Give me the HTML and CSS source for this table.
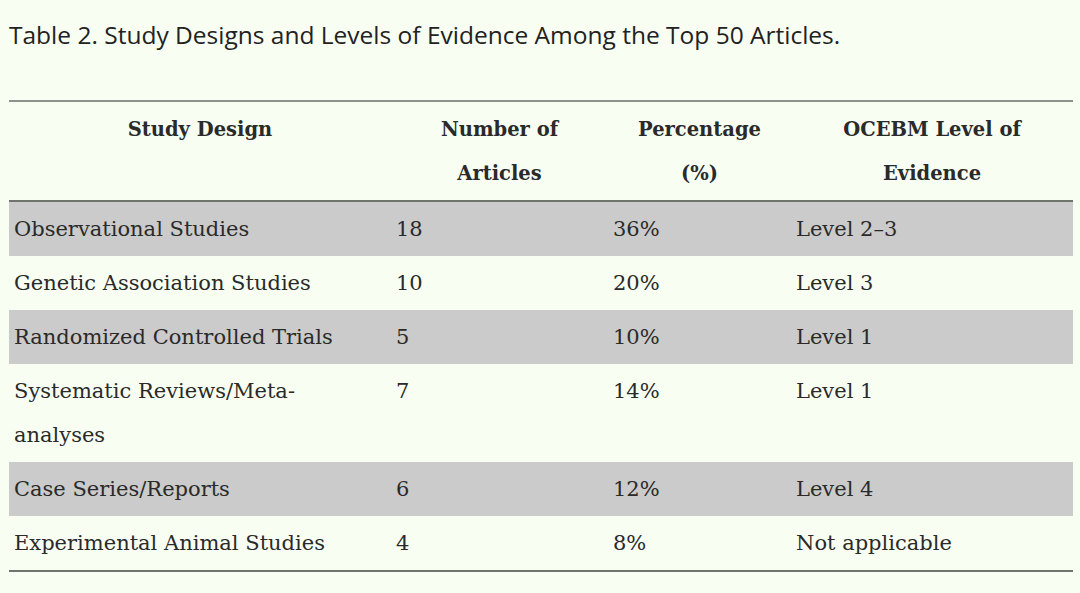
FILE: index.html
```html
<!DOCTYPE html>
<html>
<head>
<meta charset="utf-8">
<link rel="stylesheet" href="styles.css">
</head>
<body>
<div class="page">
  <h1 class="caption">Table 2. Study Designs and Levels of Evidence Among the Top 50 Articles.</h1>
  <table class="data">
    <colgroup>
      <col class="c1"><col class="c2"><col class="c3"><col class="c4">
    </colgroup>
    <thead>
      <tr>
        <th>Study Design</th>
        <th>Number of<br>Articles</th>
        <th>Percentage<br>(%)</th>
        <th>OCEBM Level of<br>Evidence</th>
      </tr>
    </thead>
    <tbody>
      <tr class="alt"><td>Observational Studies</td><td>18</td><td>36%</td><td>Level 2–3</td></tr>
      <tr><td>Genetic Association Studies</td><td>10</td><td>20%</td><td>Level 3</td></tr>
      <tr class="alt"><td>Randomized Controlled Trials</td><td>5</td><td>10%</td><td>Level 1</td></tr>
      <tr><td>Systematic Reviews/Meta-<br>analyses</td><td>7</td><td>14%</td><td>Level 1</td></tr>
      <tr class="alt"><td>Case Series/Reports</td><td>6</td><td>12%</td><td>Level 4</td></tr>
      <tr><td>Experimental Animal Studies</td><td>4</td><td>8%</td><td>Not applicable</td></tr>
    </tbody>
  </table>
</div>
</body>
</html>
```

FILE: styles.css
```css
html, body {
  margin: 0;
  padding: 0;
  background: #f8fff2;
}
.page {
  padding: 16px 7px 0 9px;
}
.caption {
  margin: 0 0 46px 0;
  font-family: "Open Sans", "Noto Sans", sans-serif;
  font-weight: 400;
  font-size: 24.5px;
  line-height: 38px;
  color: #222;
}
.data {
  width: 1064px;
  border-collapse: collapse;
  border-top: 2px solid #8d938a;
  border-bottom: 2px solid #6f746c;
  font-family: "DejaVu Serif", "Liberation Serif", serif;
  font-size: 21px;
  color: #2a2a2a;
}
.c1 { width: 382px; }
.c2 { width: 217px; }
.c3 { width: 183px; }
.c4 { width: 282px; }
.data th {
  font-size: 19.5px;
  font-weight: 700;
  text-align: center;
  vertical-align: top;
  line-height: 44.5px;
  padding: 5.5px 5px 3px 5px;
  border-bottom: 2px solid #6f746c;
}
.data td {
  text-align: left;
  vertical-align: top;
  line-height: 44.5px;
  padding: 5.25px 5px 4.25px 5px;
}
.data tr.alt td {
  background: #cbcbcb;
}
```
